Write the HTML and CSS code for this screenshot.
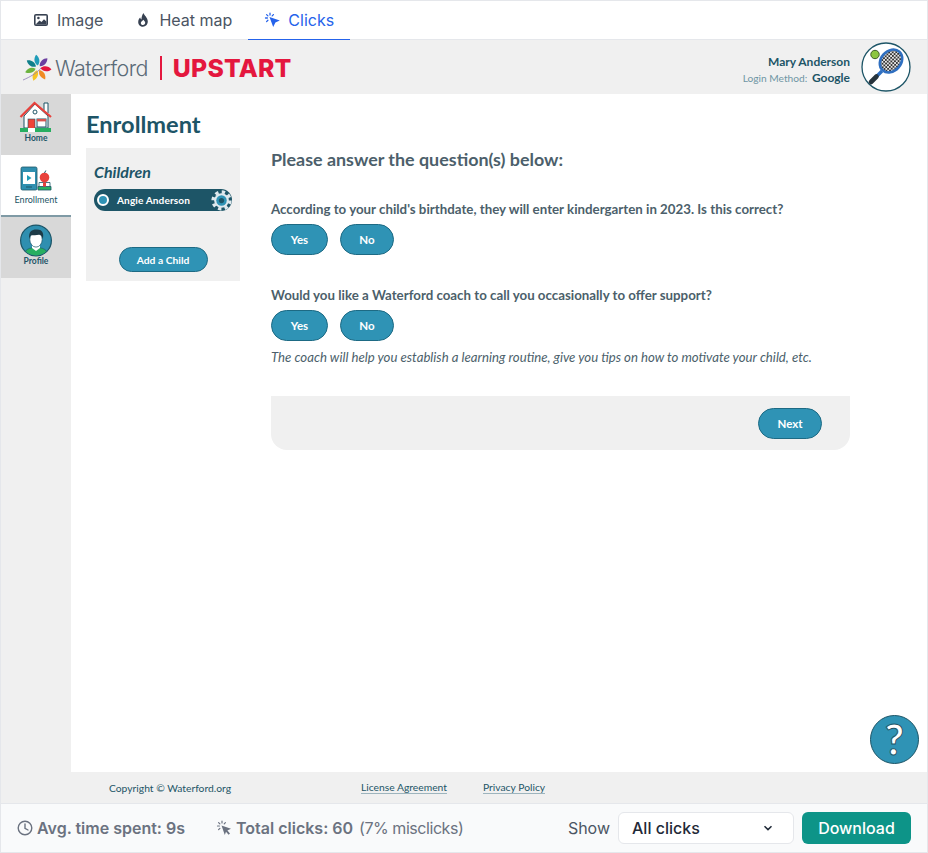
FILE: index.html
```html
<!DOCTYPE html>
<html lang="en">
<head>
    <meta charset="UTF-8">
    <meta name="viewport" content="width=device-width, initial-scale=1.0">
    <title>Enrollment - Clicks</title>
    <link rel="stylesheet" href="styles.css">
</head>
<body>
<div class="frame">
    <div class="tabs">
        <div class="tab">
            <svg class="tab-icon" viewBox="0 0 16 16"><rect x="1" y="2" width="14" height="12" rx="2" fill="#374151"/><rect x="2.6" y="3.6" width="10.8" height="8.8" fill="#fff"/><circle cx="5.4" cy="6" r="1.3" fill="#374151"/><path d="M2.6 12.4 L6.5 8.4 L8.5 10 L11 7.2 L13.4 9.6 V12.4 Z" fill="#374151"/></svg>
            Image
        </div>
        <div class="tab">
            <svg class="tab-icon" viewBox="0 0 16 16"><path fill-rule="evenodd" d="M8.6 1C9 3.4 12.8 5.4 12.8 9.6 C12.8 12.6 10.6 14.8 8 14.8 C5.4 14.8 3.2 12.7 3.2 9.9 C3.2 8 4.2 6.5 5.2 5.6 C5.4 6.6 5.8 7.2 6.5 7.6 C6.4 5.2 7.2 2.6 8.6 1 Z M8 13 C9.3 13 10.2 12 10.2 10.8 C10.2 9.6 9.2 9 8.3 7.8 C7.8 8.9 5.8 9.5 5.8 10.9 C5.8 12 6.7 13 8 13 Z" fill="#374151"/></svg>
            Heat map
        </div>
        <div class="tab tab-active">
            <svg class="tab-icon" viewBox="0 0 16 16"><path d="M5.5 5 L15.8 8.5 L11.4 10.6 L9.2 15 Z" fill="#2563eb"/><path d="M1.5 6 H3.4 M6 1.2 V3 M2.6 2.6 L3.9 3.9 M9.4 2.6 L8.2 3.9 M2.6 9.6 L3.9 8.3" stroke="#2563eb" stroke-width="1.3" stroke-linecap="round"/></svg>
            Clicks
        </div>
    </div>

    <div class="app">
        <header class="app-header">
            <div class="brand">
                <svg class="brand-mark" viewBox="0 0 30 30">
                    <path d="M15 12.5 C11.5 9.5 12 4.5 15 1.5 C18 4.5 18.5 9.5 15 12.5 Z" fill="#1f9cb8" transform="rotate(-8 15 15)"/>
                    <path d="M15 12.5 C11.5 9.5 12 4.5 15 1.5 C18 4.5 18.5 9.5 15 12.5 Z" fill="#6b3fa0" transform="rotate(44 15 15)"/>
                    <path d="M15 12.5 C11.5 9.5 12 4.5 15 1.5 C18 4.5 18.5 9.5 15 12.5 Z" fill="#e4173e" transform="rotate(96 15 15)"/>
                    <path d="M15 12.5 C11.5 9.5 12 4.5 15 1.5 C18 4.5 18.5 9.5 15 12.5 Z" fill="#f08a24" transform="rotate(148 15 15)"/>
                    <path d="M15 12.5 C11.5 9.5 12 4.5 15 1.5 C18 4.5 18.5 9.5 15 12.5 Z" fill="#f6c324" transform="rotate(200 15 15)"/>
                    <path d="M15 12.5 C11.5 9.5 12 4.5 15 1.5 C18 4.5 18.5 9.5 15 12.5 Z" fill="#6cb33f" transform="rotate(252 15 15)"/>
                    <path d="M15 12.5 C11.5 9.5 12 4.5 15 1.5 C18 4.5 18.5 9.5 15 12.5 Z" fill="#0f7f8a" transform="rotate(304 15 15)"/>
                    <path d="M0 27 C7 24 14 20 18 15" stroke="#8d7ab8" stroke-width="0.8" fill="none"/>
                </svg>
                <span class="brand-name">Waterford</span>
                <span class="brand-line"></span>
                <span class="brand-product">UPSTART</span>
            </div>
            <div class="user">
                <div class="user-text">
                    <div class="user-name">Mary Anderson</div>
                    <div class="user-login"><span>Login Method:</span> <strong>Google</strong></div>
                </div>
                <svg class="avatar" viewBox="0 0 50 50">
                    <defs>
                        <pattern id="strings" width="3.6" height="3.6" patternUnits="userSpaceOnUse" patternTransform="rotate(45)">
                            <rect width="3.6" height="3.6" fill="#e8e8e8"/>
                            <rect width="1.8" height="1.8" fill="#333"/>
                            <rect x="1.8" y="1.8" width="1.8" height="1.8" fill="#333"/>
                        </pattern>
                    </defs>
                    <circle cx="25" cy="25" r="24" fill="#fff" stroke="#1d5567" stroke-width="1.3"/>
                    <circle cx="14" cy="12.5" r="4.2" fill="#8cc63f" stroke="#3f5f2a"/>
                    <path d="M21 29 L15 35" stroke="#2f6fc0" stroke-width="3.4"/>
                    <path d="M15.5 34.5 L10 40" stroke="#27343d" stroke-width="4.6" stroke-linecap="round"/>
                    <ellipse cx="30" cy="19" rx="10" ry="12.5" transform="rotate(42 30 19)" fill="url(#strings)" stroke="#2f6fc0" stroke-width="2.6"/>
                </svg>
            </div>
        </header>

        <div class="app-body">
            <nav class="side">
                <div class="side-item">
                    <svg class="side-icon" viewBox="0 0 34 34">
                        <path d="M25 10 V3 H29 V13" fill="#fff" stroke="#1d5567"/>
                        <path d="M5 16 V28 H29 V16 L16 4 Z" fill="#fff" stroke="#1d5567"/>
                        <path d="M1.5 17 L15.5 3 L32 17" fill="none" stroke="#e8413c" stroke-width="2.2"/>
                        <circle cx="16" cy="12" r="2" fill="none" stroke="#1d5567"/>
                        <rect x="9" y="19" width="7" height="10" fill="#f04438" stroke="#1d5567" stroke-width="0.6"/>
                        <rect x="18" y="19" width="9" height="8" fill="#fff" stroke="#1d5567"/>
                        <rect x="18" y="19" width="9" height="2.4" fill="#d9534f"/>
                        <rect x="1" y="28" width="31" height="4" fill="#27ae60"/>
                        <rect x="9" y="28" width="7" height="4" fill="#fff"/>
                    </svg>
                    <span>Home</span>
                </div>
                <div class="side-item side-active">
                    <svg class="side-icon" viewBox="0 0 34 34">
                        <rect x="2" y="6" width="16" height="23" rx="1.5" fill="#2f8fb0" stroke="#1d5567" stroke-width="0.8"/>
                        <rect x="4" y="11" width="12" height="12" fill="#fff"/>
                        <path d="M8 14 L12.5 17 L8 20 Z" fill="#1f9cb8"/>
                        <path d="M7 26 H13" stroke="#1d5567"/>
                        <path d="M19 25.5 H32 V29 H19 Z" fill="#27ae60" stroke="#1d5567" stroke-width="0.8"/>
                        <path d="M20 21.5 H31 V25.5 H20 Z" fill="#fff" stroke="#1d5567" stroke-width="0.8"/>
                        <path d="M24 21.5 H27 V25.5 H24 Z" fill="#e8413c"/>
                        <circle cx="25.5" cy="16.5" r="4.8" fill="#e8413c"/>
                        <path d="M25.5 12 L26.8 9.5" stroke="#1d5567"/>
                    </svg>
                    <span>Enrollment</span>
                </div>
                <div class="side-item side-last">
                    <svg class="side-icon" viewBox="0 0 34 34">
                        <defs><clipPath id="face-clip"><circle cx="17" cy="17.5" r="15"/></clipPath></defs>
                        <circle cx="17" cy="17.5" r="15.4" fill="#2f8fb0" stroke="#1d5567" stroke-width="1.2"/>
                        <g clip-path="url(#face-clip)">
                            <path d="M4 34 C5 26 11 24.5 17 24.5 C23 24.5 29 26 30 34 Z" fill="#27ae60" stroke="#1d5567" stroke-width="0.6"/>
                            <path d="M13 21 H21 V25 L17 28 L13 25 Z" fill="#fff"/>
                            <ellipse cx="17" cy="16.5" rx="6.2" ry="7.6" fill="#fff" stroke="#1d5567" stroke-width="0.7"/>
                            <path d="M10.2 16 C9 7 15 6 18 6.5 C24 6.5 25 11 23.8 16 C23 13 22 12 20 11.8 C17 12.6 13 12 12 12.2 C11 13 10.6 14.5 10.2 16 Z" fill="#1d3b47"/>
                        </g>
                    </svg>
                    <span>Profile</span>
                </div>
            </nav>

            <main class="main">
                <h1 class="page-title">Enrollment</h1>
                <div class="columns">
                    <aside class="children">
                        <h2 class="children-title">Children</h2>
                        <div class="child-pill">
                            <span class="child-radio"></span>
                            <span class="child-name">Angie Anderson</span>
                            <svg class="child-gear" viewBox="0 0 24 24">
                                <circle cx="12" cy="12" r="9.6" fill="none" stroke="#dfe9ee" stroke-width="4" stroke-dasharray="3.77 3.77"/>
                                <circle cx="12" cy="12" r="8.4" fill="#dfe9ee"/>
                                <circle cx="12" cy="12" r="6" fill="#2f93b5"/>
                                <circle cx="12" cy="12" r="3" fill="#1d5567"/>
                            </svg>
                        </div>
                        <button class="btn btn-add">Add a Child</button>
                    </aside>

                    <section class="questions">
                        <h2 class="questions-title">Please answer the question(s) below:</h2>
                        <p class="question">According to your child's birthdate, they will enter kindergarten in 2023. Is this correct?</p>
                        <div class="answers">
                            <button class="btn btn-yes">Yes</button>
                            <button class="btn btn-no">No</button>
                        </div>
                        <p class="question question-second">Would you like a Waterford coach to call you occasionally to offer support?</p>
                        <div class="answers">
                            <button class="btn btn-yes">Yes</button>
                            <button class="btn btn-no">No</button>
                        </div>
                        <p class="note">The coach will help you establish a learning routine, give you tips on how to motivate your child, etc.</p>
                        <div class="next-bar">
                            <button class="btn btn-next">Next</button>
                        </div>
                    </section>
                </div>
                <div class="help">?</div>
            </main>
        </div>

        <footer class="app-footer">
            <span class="copyright">Copyright © Waterford.org</span>
            <a class="footer-link footer-license">License Agreement</a>
            <a class="footer-link">Privacy Policy</a>
        </footer>
    </div>

    <div class="stats">
        <div class="stat stat-time">
            <svg class="stat-icon" viewBox="0 0 16 16"><circle cx="8" cy="8" r="6.8" fill="none" stroke="#6b7280" stroke-width="1.4"/><path d="M8 4 V8.4 L11 10" fill="none" stroke="#6b7280" stroke-width="1.4" stroke-linecap="round"/></svg>
            <strong>Avg. time spent: 9s</strong>
        </div>
        <div class="stat stat-clicks">
            <svg class="stat-icon" viewBox="0 0 16 16"><path d="M5.5 5.5 L15 8.8 L11.4 10.4 L14 13.4 L12.6 14.8 L10 11.8 L8.8 15 Z" fill="#6b7280"/><path d="M1.5 6 H3.4 M6 1.2 V3 M2.6 2.6 L3.9 3.9 M9.4 2.6 L8.2 3.9 M2.6 9.6 L3.9 8.3" stroke="#6b7280" stroke-width="1.2" stroke-linecap="round"/></svg>
            <strong>Total clicks: 60</strong> <span class="misclicks">(7% misclicks)</span>
        </div>
        <div class="stats-right">
            <span class="show-label">Show</span>
            <div class="select">
                All clicks
                <svg class="select-arrow" viewBox="0 0 10 6"><path d="M1.5 1.2 L5 4.6 L8.5 1.2" fill="none" stroke="#1f2937" stroke-width="1.5"/></svg>
            </div>
            <button class="download">Download</button>
        </div>
    </div>
</div>
</body>
</html>
```

FILE: styles.css
```css
html, body {
    margin: 0;
    padding: 0;
}

body {
    background: #fff;
    font-family: "Inter", sans-serif;
}

.frame {
    width: 928px;
    height: 853px;
    box-sizing: border-box;
    border: 1px solid #e5e7eb;
    display: flex;
    flex-direction: column;
    overflow: hidden;
}

/* top tabs */
.tabs {
    height: 38px;
    display: flex;
    padding-left: 16px;
    background: #fff;
    border-bottom: 1px solid #e5e7eb;
}

.tab {
    display: flex;
    align-items: center;
    gap: 8px;
    padding: 0 16px;
    font-size: 16px;
    color: #4b5563;
}

.tab-icon {
    width: 16px;
    height: 16px;
}

.tab-active {
    color: #2563eb;
    border-bottom: 1px solid #2563eb;
    margin-bottom: -1px;
}

/* embedded app */
.app {
    flex: 1;
    display: flex;
    flex-direction: column;
    font-family: "Lato", sans-serif;
    min-height: 0;
}

.app-header {
    height: 54px;
    flex: none;
    box-sizing: border-box;
    background: #f0f0f0;
    display: flex;
    justify-content: space-between;
    align-items: center;
    padding: 0 16px 0 22px;
}

.brand {
    display: flex;
    align-items: center;
    padding-top: 2px;
}

.brand-mark {
    width: 30px;
    height: 30px;
}

.brand-name {
    font-family: "Inter", sans-serif;
    font-size: 21.5px;
    font-weight: 300;
    letter-spacing: -0.6px;
    color: #5b6b78;
    margin-left: 2px;
}

.brand-line {
    width: 2px;
    height: 24px;
    background: #e4173e;
    margin: 0 11px 0 12px;
}

.brand-product {
    font-family: "Inter", sans-serif;
    font-size: 24.8px;
    font-weight: 800;
    color: #e4173e;
    letter-spacing: 0.2px;
}

.user {
    display: flex;
    align-items: center;
    gap: 11px;
}

.user-text {
    text-align: right;
    padding-top: 5px;
}

.user-name {
    font-size: 12px;
    font-weight: 700;
    color: #1d5567;
    line-height: 16px;
}

.user-login {
    font-size: 10.2px;
    color: #6f96a4;
    line-height: 15px;
}

.user-login strong {
    font-size: 12px;
    color: #1d5567;
    margin-left: 2px;
}

.avatar {
    width: 50px;
    height: 50px;
}

.app-body {
    flex: 1;
    display: flex;
    min-height: 0;
}

.side {
    width: 70px;
    flex: none;
    background: #f0f0f0;
}

.side-item {
    height: 61px;
    box-sizing: border-box;
    background: #d8d8d8;
    display: flex;
    flex-direction: column;
    align-items: center;
    padding-top: 6px;
    font-size: 8.5px;
    font-weight: 700;
    color: #1d5567;
}

.side-active {
    background: #fff;
    height: 62px;
    border-bottom: 2px solid #7f9aa5;
    font-size: 9px;
    font-weight: 400;
}

.side-icon {
    width: 34px;
    height: 34px;
    margin-bottom: -1px;
}

.main {
    flex: 1;
    position: relative;
    background: #fff;
    padding: 15px 0 0 15px;
}

.page-title {
    margin: 0;
    font-size: 23.6px;
    line-height: 30px;
    font-weight: 700;
    color: #1d5567;
}

.columns {
    display: flex;
    margin-top: 9px;
}

.children {
    width: 154px;
    height: 133px;
    box-sizing: border-box;
    background: #f0f0f0;
    padding: 14px 8px 0;
    flex: none;
    display: flex;
    flex-direction: column;
}

.children-title {
    margin: 0;
    font-size: 16px;
    line-height: 20px;
    font-weight: 700;
    font-style: italic;
    color: #1d5567;
}

.child-pill {
    margin-top: 7px;
    height: 22px;
    border-radius: 11px;
    background: #1d5567;
    display: flex;
    align-items: center;
    padding-left: 3px;
    color: #fff;
    font-size: 10.1px;
    font-weight: 700;
    letter-spacing: 0.1px;
}

.child-radio {
    width: 8px;
    height: 8px;
    border: 2px solid #fff;
    border-radius: 50%;
    background: #2f93b5;
}

.child-name {
    margin-left: 8px;
    flex: 1;
}

.child-gear {
    width: 21px;
    height: 21px;
}

.btn {
    border: 1px solid #1d6a84;
    background: #2f93b5;
    color: #fff;
    font-family: "Lato", sans-serif;
    font-weight: 700;
    font-size: 11.5px;
    padding: 0;
    border-radius: 16px;
}

.btn-add {
    width: 89px;
    height: 25px;
    margin: 36px auto 0;
    font-size: 10.3px;
}

.questions {
    margin-left: 31px;
    width: 579px;
    color: #4c5f6b;
}

.questions-title {
    margin: 1px 0 0;
    font-size: 17.9px;
    line-height: 20px;
    font-weight: 700;
}

.question {
    margin: 32px 0 0;
    font-size: 13.3px;
    line-height: 16px;
    font-weight: 700;
}

.question-second {
    margin-top: 32px;
}

.answers {
    display: flex;
    gap: 12px;
    margin-top: 7px;
}

.btn-yes {
    width: 57px;
    height: 31px;
}

.btn-no {
    width: 54px;
    height: 31px;
}

.note {
    margin: 8px 0 0;
    font-size: 13.2px;
    line-height: 16px;
    font-style: italic;
}

.next-bar {
    margin-top: 31px;
    height: 54px;
    box-sizing: border-box;
    background: #f0f0f0;
    border-radius: 0 0 16px 16px;
    display: flex;
    justify-content: flex-end;
    align-items: center;
    padding-right: 28px;
}

.btn-next {
    width: 64px;
    height: 31px;
}

.help {
    position: absolute;
    right: 8px;
    bottom: 8px;
    width: 49px;
    height: 49px;
    box-sizing: border-box;
    border-radius: 50%;
    border: 1px solid #1d5567;
    background: #2f93b5;
    color: #fff;
    font-size: 42px;
    font-weight: 700;
    line-height: 46px;
    text-align: center;
    -webkit-text-stroke: 1px #1d5567;
}

.app-footer {
    height: 31px;
    flex: none;
    box-sizing: border-box;
    background: #f0f0f0;
    display: flex;
    align-items: center;
    padding-left: 108px;
    font-size: 10.3px;
    color: #1d5567;
}

.footer-link {
    border-bottom: 1px solid #9db4bd;
    line-height: 11px;
}

.footer-license {
    margin-left: 130px;
    margin-right: 36px;
}

/* stats bar */
.stats {
    height: 49px;
    flex: none;
    box-sizing: border-box;
    background: #f9fafb;
    border-top: 1px solid #e5e7eb;
    display: flex;
    align-items: center;
    padding: 0 16px;
    font-size: 16px;
    color: #6b7280;
}

.stat {
    display: flex;
    align-items: center;
    gap: 4px;
    white-space: pre;
}

.stat strong {
    font-weight: 600;
}

.stat-icon {
    width: 16px;
    height: 16px;
}

.stat-clicks {
    margin-left: 31px;
}

.misclicks {
    margin-left: 2px;
    letter-spacing: -0.45px;
}

.stats-right {
    margin-left: auto;
    display: flex;
    align-items: center;
}

.show-label {
    color: #4b5563;
}

.select {
    width: 176px;
    height: 32px;
    box-sizing: border-box;
    margin-left: 8px;
    padding: 0 20px 0 13px;
    background: #fff;
    border: 1px solid #e5e7eb;
    border-radius: 6px;
    display: flex;
    align-items: center;
    justify-content: space-between;
    color: #1f2937;
    font-weight: 500;
}

.select-arrow {
    width: 10px;
    height: 6px;
}

.download {
    width: 109px;
    height: 32px;
    margin-left: 8px;
    border: 0;
    border-radius: 6px;
    background: #0d9488;
    color: #fff;
    font-family: "Inter", sans-serif;
    font-size: 16px;
    font-weight: 500;
}
```
